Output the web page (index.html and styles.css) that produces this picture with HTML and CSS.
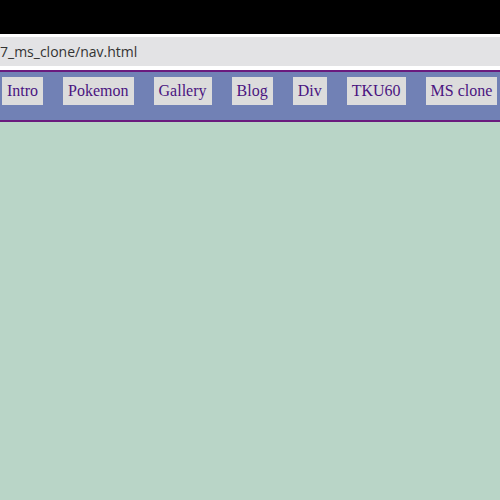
FILE: index.html
```html
<!DOCTYPE html>
<html>
<head>
<meta charset="utf-8">
<link rel="stylesheet" href="styles.css">
</head>
<body>
<div class="chrome-top"></div>
<div class="address"><span class="url">7_ms_clone/nav.html</span></div>
<nav class="nav">
  <a class="item">Intro</a>
  <a class="item">Pokemon</a>
  <a class="item">Gallery</a>
  <a class="item">Blog</a>
  <a class="item">Div</a>
  <a class="item">TKU60</a>
  <a class="item">MS clone</a>
</nav>
</body>
</html>
```
FILE: styles.css
```css
html, body {
  margin: 0;
  padding: 0;
  height: 100%;
}
body {
  background: #b9d5c7;
  overflow: hidden;
}
.chrome-top {
  height: 34px;
  background: #000;
  border-bottom: 3px solid #fff;
}
.address {
  height: 29px;
  background: #e3e3e5;
  border-bottom: 4px solid #fff;
  display: flex;
  align-items: center;
  font-family: "Open Sans", sans-serif;
  font-size: 14px;
  color: #333;
  white-space: nowrap;
}
.url {
  margin-left: 0;
}
.nav {
  height: 43px;
  padding-top: 5px;
  padding-left: 2px;
  background: #7181b5;
  border-top: 2px solid #6a1b7e;
  border-bottom: 2px solid #6a1b7e;
  display: flex;
  align-items: flex-start;
  gap: 20px;
  white-space: nowrap;
}
.item {
  background: #dcdcdc;
  color: #4a1480;
  font-family: "Liberation Serif", serif;
  font-size: 16px;
  line-height: 18px;
  padding: 5px;
}
```
